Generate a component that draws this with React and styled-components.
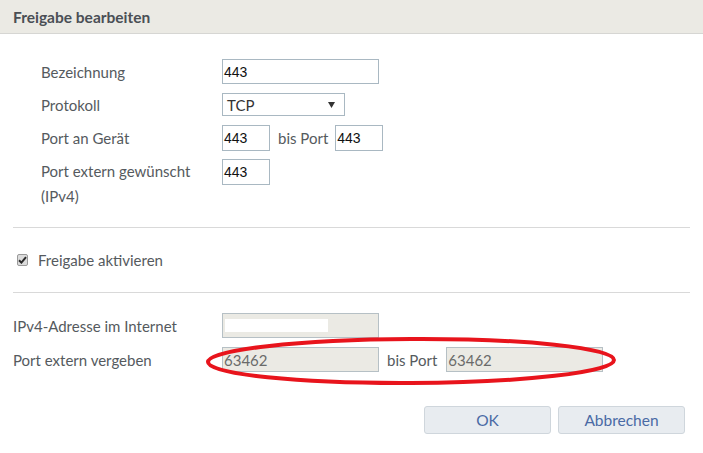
import React from "react";
import styled, { createGlobalStyle } from "styled-components";

const Global = createGlobalStyle`
  html, body { margin: 0; padding: 0; background: #ffffff; }
  body { font-family: Lato, "Noto Sans", sans-serif; }
  * { box-sizing: border-box; }
`;

const Page = styled.div`
  width: 703px;
  height: 453px;
  background: #fff;
  overflow: hidden;
`;

const Header = styled.div`
  height: 34px;
  background: #ebeae4;
  border-bottom: 1px solid #d6d6d3;
  padding-left: 13px;
  display: flex;
  align-items: center;
  font-size: 15.5px;
  font-weight: 700;
  color: #4a4f55;
`;

const Section = styled.div`
  position: relative;
  padding: ${(p) => p.$pad};
`;

const Row = styled.div`
  display: grid;
  grid-template-columns: ${(p) => p.$label}px auto;
  align-items: ${(p) => (p.$top ? "start" : "center")};
  margin-bottom: ${(p) => p.$mb || 0}px;
`;

const Label = styled.div`
  font-size: 15px;
  color: #555a5e;
  line-height: ${(p) => (p.$multi ? 25 : 18)}px;
`;

const Controls = styled.div`
  display: flex;
  align-items: center;
`;

const Field = styled.div`
  width: ${(p) => p.$w}px;
  height: ${(p) => p.$h}px;
  border: 1px solid ${(p) => (p.$disabled ? "#b6c0c5" : "#a9b8c2")};
  background: ${(p) => (p.$disabled ? "#ebeae4" : "#fff")};
  color: ${(p) => (p.$disabled ? "#6a6a6a" : "#111")};
  font-family: ${(p) => (p.$disabled ? 'Lato, "Noto Sans", sans-serif' : '"Liberation Sans", Arial, sans-serif')};
  font-size: ${(p) => (p.$disabled ? "15px" : "14px")};
  line-height: 16px;
  display: flex;
  align-items: center;
  padding-left: 1px;
`;

const Redacted = styled.span`
  display: block;
  width: 103px;
  height: 13px;
  background: #ffffff;
  margin-left: 1px;
`;

const SelectBox = styled.div`
  width: 123px;
  height: 23px;
  border: 1px solid #a9b8c2;
  background: #fff;
  display: flex;
  align-items: center;
  justify-content: space-between;
  padding: 0 9px 0 4px;
  font-family: Lato, "Noto Sans", sans-serif;
  font-size: 15px;
  line-height: 16px;
  color: #333;
`;

const Between = styled.span`
  font-size: 15px;
  color: #555a5e;
  margin: 0 ${(p) => p.$r}px 0 8px;
`;

const Divider = styled.div`
  height: 1px;
  background: #d9d9d9;
  margin: 0 13px 0 13px;
`;

const CheckRow = styled.label`
  display: flex;
  align-items: center;
  height: 24px;
  font-size: 15px;
  color: #555a5e;
  gap: 10px;
`;

const CheckBox = styled.span`
  width: 11px;
  height: 12px;
  border: 1px solid #9a9a9a;
  border-radius: 2px;
  background: #dcdcdc;
  display: flex;
  align-items: center;
  justify-content: center;
`;

const Footer = styled.div`
  display: flex;
  justify-content: flex-end;
  gap: 7px;
  padding: 34px 18px 0 0;
`;

const Button = styled.button`
  width: ${(p) => p.$w}px;
  height: 28px;
  background: #e8ecf0;
  border: 1px solid #cfd6dc;
  border-radius: 3px;
  color: #4a6aa5;
  font-family: Lato, "Noto Sans", sans-serif;
  font-size: 15.5px;
  padding: 0;
`;

const Annotation = styled.svg`
  position: absolute;
  left: 0;
  top: 0;
  pointer-events: none;
`;

export default function App() {
  return (
    <>
      <Global />
      <Page>
        <Header>Freigabe bearbeiten</Header>

        <Section $pad="25px 0 18px 41px">
          <Row $label={181} $mb={9}>
            <Label>Bezeichnung</Label>
            <Field $w={157} $h={25}>443</Field>
          </Row>
          <Row $label={181} $mb={9}>
            <Label>Protokoll</Label>
            <SelectBox>
              <span>TCP</span>
              <svg width="7" height="6" viewBox="0 0 7 6">
                <path d="M0 0 L7 0 L3.5 6 Z" fill="#333" />
              </svg>
            </SelectBox>
          </Row>
          <Row $label={181} $mb={8}>
            <Label>Port an Gerät</Label>
            <Controls>
              <Field $w={48} $h={26}>443</Field>
              <Between $r={7}>bis Port</Between>
              <Field $w={48} $h={26}>443</Field>
            </Controls>
          </Row>
          <Row $label={181} $top>
            <Label $multi>
              Port extern gewünscht
              <br />
              (IPv4)
            </Label>
            <Field $w={48} $h={26}>443</Field>
          </Row>
        </Section>

        <Divider />

        <Section $pad="20px 0 20px 17px">
          <CheckRow>
            <CheckBox>
              <svg width="9" height="8" viewBox="0 0 9 8">
                <path d="M1 4.2 L3.4 6.6 L8 1.2" stroke="#2a2a2a" strokeWidth="2" fill="none" />
              </svg>
            </CheckBox>
            Freigabe aktivieren
          </CheckRow>
        </Section>

        <Divider />

        <Section $pad="20px 0 0 13px">
          <Row $label={209} $mb={9}>
            <Label>IPv4-Adresse im Internet</Label>
            <Field $w={157} $h={25} $disabled>
              <Redacted />
            </Field>
          </Row>
          <Row $label={209}>
            <Label>Port extern vergeben</Label>
            <Controls>
              <Field $w={157} $h={25} $disabled>63462</Field>
              <Between $r={9}>bis Port</Between>
              <Field $w={157} $h={25} $disabled>63462</Field>
            </Controls>
          </Row>
          <Annotation width="703" height="100" viewBox="0 0 703 100">
            <ellipse
              cx="411"
              cy="68"
              rx="203"
              ry="22"
              fill="none"
              stroke="#e8141c"
              strokeWidth="4"
              transform="rotate(-0.3 411 68)"
            />
          </Annotation>
        </Section>

        <Footer>
          <Button $w={127}>OK</Button>
          <Button $w={127}>Abbrechen</Button>
        </Footer>
      </Page>
    </>
  );
}
